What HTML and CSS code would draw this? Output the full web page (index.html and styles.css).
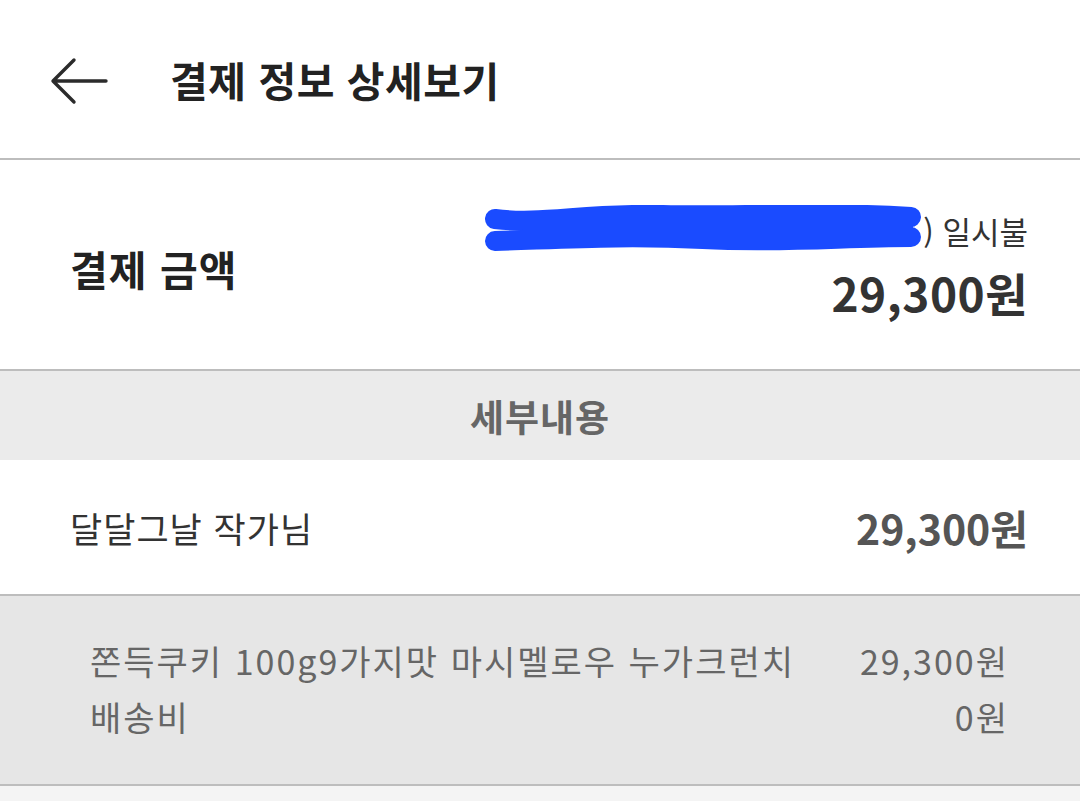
FILE: index.html
```html
<!DOCTYPE html>
<html lang="ko">
<head>
    <meta charset="utf-8">
    <title>결제 정보 상세보기</title>
    <link rel="stylesheet" href="styles.css">
</head>
<body>
    <header class="top-bar">
        <svg class="back" width="58" height="50" viewBox="0 0 58 50">
            <path d="M56 25 H4 M24 4 L3 25 L24 46" fill="none" stroke="#2b2b2b" stroke-width="3.4" stroke-linecap="round" stroke-linejoin="round"/>
        </svg>
        <h1>결제 정보 상세보기</h1>
    </header>

    <section class="summary">
        <div class="summary-label">결제 금액</div>
        <div class="summary-right">
            <div class="card-line">
                <span class="redact"><svg width="440" height="52" viewBox="0 0 440 52">
                        <path d="M12 14 C60 20 100 8 180 10 C260 12 330 6 428 12" fill="none" stroke="#1a4bff" stroke-width="20" stroke-linecap="round"/>
                        <path d="M12 36 C80 34 140 30 220 34 C300 38 360 32 428 32" fill="none" stroke="#1a4bff" stroke-width="20" stroke-linecap="round"/>
                        <path d="M40 24 H430" stroke="#1a4bff" stroke-width="20"/>
                    </svg></span>) 일시불
            </div>
            <div class="summary-amount">29,300원</div>
        </div>
    </section>

    <div class="detail-title">세부내용</div>

    <div class="seller-row">
        <span class="seller-name">달달그날 작가님</span>
        <span class="seller-amount">29,300원</span>
    </div>

    <div class="items">
        <div class="item">
            <span>쫀득쿠키 100g9가지맛 마시멜로우 누가크런치</span>
            <span>29,300원</span>
        </div>
        <div class="item">
            <span>배송비</span>
            <span>0원</span>
        </div>
    </div>
</body>
</html>
```

FILE: styles.css
```css
body {
    margin: 0;
    background-color: #f4f4f4;
    font-family: "Noto Sans CJK KR", "Noto Sans", sans-serif;
    color: #222;
}
.top-bar {
    height: 158px;
    background-color: #fff;
    border-bottom: 2px solid #bdbdbd;
    display: flex;
    align-items: center;
    padding-left: 50px;
}
.back {
    display: block;
    margin-top: 4px;
}
.top-bar h1 {
    margin: 0 0 0 62px;
    font-size: 41px;
    font-weight: 700;
    letter-spacing: 0.5px;
    color: #222;
}
.summary {
    height: 209px;
    background-color: #fff;
    border-bottom: 2px solid #bdbdbd;
    display: flex;
    align-items: center;
    justify-content: space-between;
    padding: 0 52px 0 70px;
}
.summary-label {
    font-size: 41px;
    font-weight: 700;
    letter-spacing: 1px;
    color: #222;
    margin-top: 6px;
}
.summary-right {
    text-align: right;
    margin-top: 2px;
}
.card-line {
    font-size: 31px;
    color: #333;
    line-height: 44px;
    display: flex;
    align-items: center;
    justify-content: flex-end;
}
.redact {
    display: inline-block;
    width: 440px;
    height: 52px;
}
.redact svg {
    display: block;
}
.summary-amount {
    font-size: 46px;
    font-weight: 700;
    letter-spacing: 0.5px;
    color: #333;
    line-height: 70px;
}
.detail-title {
    height: 89px;
    background-color: #ebebeb;
    display: flex;
    align-items: center;
    justify-content: center;
    font-size: 37px;
    font-weight: 700;
    letter-spacing: 1px;
    color: #666;
}
.seller-row {
    height: 134px;
    background-color: #fff;
    border-bottom: 2px solid #bdbdbd;
    display: flex;
    align-items: center;
    justify-content: space-between;
    padding: 0 52px 0 70px;
}
.seller-name {
    font-size: 35px;
    letter-spacing: 1px;
    color: #333;
}
.seller-amount {
    font-size: 41px;
    font-weight: 700;
    color: #555;
}
.items {
    height: 190px;
    box-sizing: border-box;
    background-color: #e6e6e6;
    border-bottom: 2px solid #bdbdbd;
    padding: 37px 73px 0 90px;
}
.item {
    display: flex;
    justify-content: space-between;
    font-size: 34px;
    letter-spacing: 2px;
    color: #666;
    line-height: 56px;
}
.item span:last-child {
    margin-right: -2px;
}
```
